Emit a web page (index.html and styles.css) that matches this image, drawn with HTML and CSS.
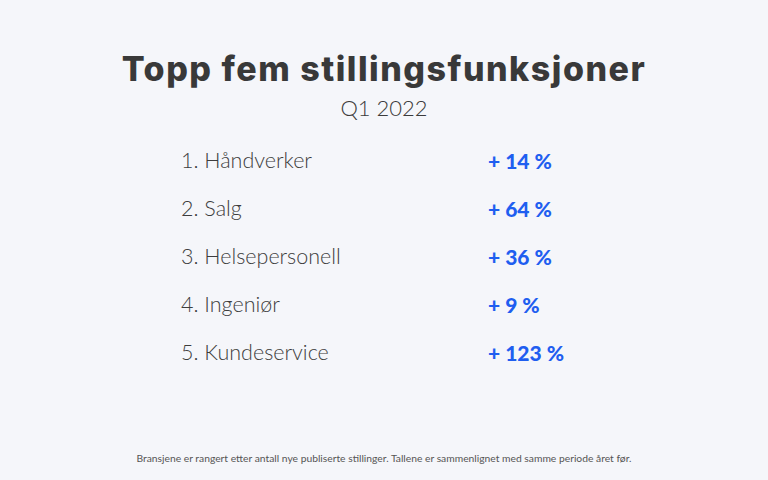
FILE: index.html
```html
<!DOCTYPE html>
<html lang="no">
<head>
<meta charset="utf-8">
<link rel="stylesheet" href="styles.css">
</head>
<body>
<main class="page">
  <header class="head">
    <h1 class="title">Topp fem stillingsfunksjoner</h1>
    <p class="subtitle">Q1 2022</p>
  </header>
  <ol class="list">
    <li class="row"><span class="name">1. Håndverker</span><span class="pct">+ 14 %</span></li>
    <li class="row"><span class="name">2. Salg</span><span class="pct">+ 64 %</span></li>
    <li class="row"><span class="name">3. Helsepersonell</span><span class="pct">+ 36 %</span></li>
    <li class="row"><span class="name">4. Ingeniør</span><span class="pct">+ 9 %</span></li>
    <li class="row"><span class="name">5. Kundeservice</span><span class="pct">+ 123 %</span></li>
  </ol>
  <p class="note">Bransjene er rangert etter antall nye publiserte stillinger. Tallene er sammenlignet med samme periode året før.</p>
</main>
</body>
</html>
```
FILE: styles.css
```css
html, body {
  margin: 0;
  padding: 0;
  background: #f5f6fa;
}
body {
  font-family: Lato, "Noto Sans", sans-serif;
  color: #3b3b3b;
}
.page {
  width: 768px;
  height: 480px;
  display: flex;
  flex-direction: column;
  align-items: center;
  box-sizing: border-box;
  padding-top: 48px;
}
.head {
  display: flex;
  flex-direction: column;
  align-items: center;
}
.title {
  margin: 0;
  font-family: Inter, Lato, sans-serif;
  font-size: 34px;
  line-height: 42px;
  font-weight: 800;
  letter-spacing: 1.5px;
  color: #393939;
}
.subtitle {
  margin: 4px 0 0;
  font-size: 22px;
  line-height: 28px;
  font-weight: 300;
  color: #3b3b3b;
}
.list {
  list-style: none;
  margin: 14px 0 0;
  padding: 0;
  width: 406px;
  display: flex;
  flex-direction: column;
}
.row {
  display: grid;
  grid-template-columns: 307px auto;
  height: 48px;
  align-items: center;
}
.name {
  font-size: 21.5px;
  font-weight: 300;
  color: #3d3d3d;
}
.pct {
  font-size: 21px;
  font-weight: 900;
  color: #1f5ef0;
}
.note {
  margin: auto 0 15px;
  font-size: 10.3px;
  line-height: 14px;
  color: #555;
}
```
